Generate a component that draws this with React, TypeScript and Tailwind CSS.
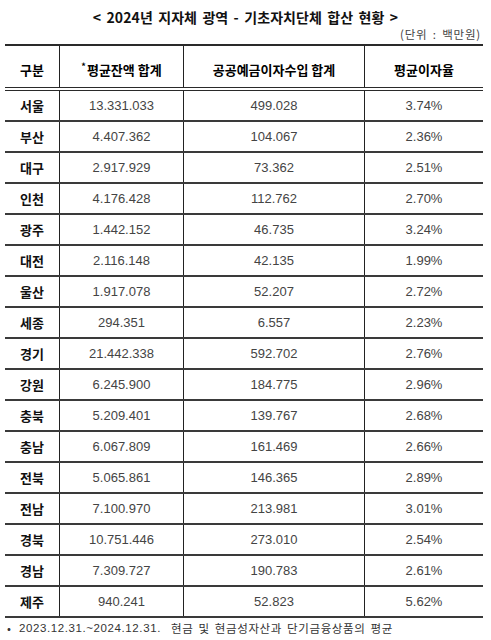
import React from "react";

const rows: [string, string, string, string][] = [
  ["서울", "13.331.033", "499.028", "3.74%"],
  ["부산", "4.407.362", "104.067", "2.36%"],
  ["대구", "2.917.929", "73.362", "2.51%"],
  ["인천", "4.176.428", "112.762", "2.70%"],
  ["광주", "1.442.152", "46.735", "3.24%"],
  ["대전", "2.116.148", "42.135", "1.99%"],
  ["울산", "1.917.078", "52.207", "2.72%"],
  ["세종", "294.351", "6.557", "2.23%"],
  ["경기", "21.442.338", "592.702", "2.76%"],
  ["강원", "6.245.900", "184.775", "2.96%"],
  ["충북", "5.209.401", "139.767", "2.68%"],
  ["충남", "6.067.809", "161.469", "2.66%"],
  ["전북", "5.065.861", "146.365", "2.89%"],
  ["전남", "7.100.970", "213.981", "3.01%"],
  ["경북", "10.751.446", "273.010", "2.54%"],
  ["경남", "7.309.727", "190.783", "2.61%"],
  ["제주", "940.241", "52.823", "5.62%"],
];

const kr = "font-['Noto_Sans_CJK_KR','Noto_Sans',sans-serif]";
const num = "font-['Liberation_Sans','Noto_Sans_CJK_KR',sans-serif]";
const grid = "grid grid-cols-[55px_124px_181px_118px]";

const App = () => {
  return (
    <div className="h-[640px] w-[491px] bg-white text-black">
      <div className={`pt-[7px] text-center text-[14px] font-bold leading-[20px] tracking-[0.1px] [word-spacing:2px] text-[#111] ${kr}`}>
        &lt; 2024년 지자체 광역 - 기초자치단체 합산 현황 &gt;
      </div>
      <div className={`pr-[10px] text-right text-[11.5px] leading-[14px] tracking-[0.8px] [word-spacing:2px] text-[#444] ${kr}`}>
        (단위 : 백만원)
      </div>
      <div className="ml-[5px] mt-[3px] w-[478px] border-t-2 border-[#2a2a2a]">
        <div className={`${grid} h-[45px] border-b-4 border-double border-[#2a2a2a] text-[13px] font-bold ${kr}`}>
          <div className="flex items-center justify-center border-r border-[#222] pt-[6px]">구분</div>
          <div className="flex items-center justify-center border-r border-[#222] pt-[6px]">
            <span className="mr-[1px] self-start pt-[10px] text-[9px] leading-none">*</span>평균잔액 합계
          </div>
          <div className="flex items-center justify-center border-r border-[#222] pt-[6px]">공공예금이자수입 합계</div>
          <div className="flex items-center justify-center pt-[6px]">평균이자율</div>
        </div>
        {rows.map(([region, balance, income, rate]) => (
          <div key={region} className={`${grid} h-[31px] border-b-2 border-[#3a3a3a]`}>
            <div className={`flex items-center justify-center border-r border-[#222] text-[13px] font-bold text-[#111] ${kr}`}>
              {region}
            </div>
            <div className={`flex items-center justify-center border-r border-[#222] text-[13px] text-[#444] ${num}`}>
              {balance}
            </div>
            <div className={`flex items-center justify-center border-r border-[#222] text-[13px] text-[#444] ${num}`}>
              {income}
            </div>
            <div className={`flex items-center justify-center text-[13px] text-[#444] ${num}`}>{rate}</div>
          </div>
        ))}
      </div>
      <div className={`mt-[2px] flex items-center pl-[7px] text-[11.5px] leading-[16px] text-[#333] ${kr}`}>
        <span className="mr-[8px]">•</span>
        <span className={`${num} tracking-[0.6px]`}>2023.12.31.~2024.12.31.</span>
        <span className="ml-[10px] tracking-[0.6px] [word-spacing:2px]">현금 및 현금성자산과 단기금융상품의 평균</span>
      </div>
    </div>
  );
};

export default App;
